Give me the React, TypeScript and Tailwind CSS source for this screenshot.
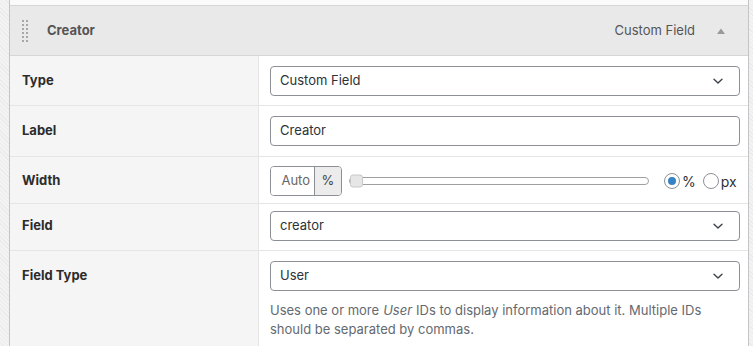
import React from 'react';

const font = { fontFamily: 'Inter, "Noto Sans", sans-serif' };

function Chevron() {
  return (
    <svg width="12" height="12" viewBox="0 0 12 12" className="absolute right-[15px] top-1/2 -translate-y-1/2">
      <path d="M2 4.2 L6 8 L10 4.2" fill="none" stroke="#3c434a" strokeWidth="1.4" strokeLinecap="round" strokeLinejoin="round" />
    </svg>
  );
}

function Select({ value }: { value: string }) {
  return (
    <div className="relative h-[30px] w-full rounded-[4px] border border-[#8c8f94] bg-white flex items-center pl-[9px] text-[13px] text-[#2c3338]">
      {value}
      <Chevron />
    </div>
  );
}

function Row({
  label,
  children,
  pt = 'pt-[10px]',
  h = 'h-[50px]',
  last = false,
}: {
  label: string;
  children: React.ReactNode;
  pt?: string;
  h?: string;
  last?: boolean;
}) {
  return (
    <div className={`flex ${last ? 'flex-1' : `${h} border-b border-[#e5e5e5]`}`}>
      <div className={`w-[249px] shrink-0 bg-[#f5f5f5] border-r border-[#e5e5e5] pl-[12px] ${pt}`}>
        <div className="h-[30px] flex items-center text-[13px] font-bold text-[#2c2c2c]">{label}</div>
      </div>
      <div className={`flex-1 pl-[11px] pr-[8px] ${pt}`}>{children}</div>
    </div>
  );
}

export default function App() {
  return (
    <div style={font} className="w-[753px] h-[346px] overflow-hidden flex bg-[#f0f0f0]">
      <div className="w-[9px] shrink-0 bg-[repeating-linear-gradient(45deg,#f3f3f3_0px,#f3f3f3_2px,#ebebeb_2px,#ebebeb_3px)]" />
      <div className="w-[740px] shrink-0 flex flex-col border-x border-[#c3c4c7] bg-white">
        <div className="h-[6px] shrink-0 border-b border-[#d6d6d6] bg-[#fafafa]" />
        {/* header */}
        <div className="h-[50px] shrink-0 flex items-center bg-[#e9e9e9] border-b border-[#d6d6d6] pl-[12px] pr-[22px]">
          <div className="grid grid-cols-2 gap-x-[2px] gap-y-[2px] w-[6px]">
            {Array.from({ length: 12 }).map((_, i) => (
              <span key={i} className="w-[2px] h-[2px] bg-[#a7a7a7]" />
            ))}
          </div>
          <span className="ml-[19px] text-[13px] font-bold text-[#555]">Creator</span>
          <span className="ml-auto text-[13px] text-[#555]">Custom Field</span>
          <svg width="10" height="8" viewBox="0 0 10 8" className="ml-[21px]">
            <path d="M1 7 L5 1.5 L9 7 Z" fill="#999" />
          </svg>
        </div>

        <Row label="Type">
          <Select value="Custom Field" />
        </Row>

        <Row label="Label" h="h-[51px]">
          <div className="h-[30px] w-full rounded-[4px] border border-[#8c8f94] bg-white flex items-center pl-[9px] text-[13px] text-[#2c3338]">
            Creator
          </div>
        </Row>

        <Row label="Width" h="h-[47px]" pt="pt-[9px]">
          <div className="h-[30px] flex items-center">
            <div className="h-[30px] flex rounded-[4px] border border-[#8c8f94] overflow-hidden text-[13px]">
              <span className="w-[43px] flex items-center justify-end pr-[4px] text-[#666] bg-white">Auto</span>
              <span className="w-[27px] flex items-center justify-center border-l border-[#8c8f94] bg-[#ececec] text-[#444]">%</span>
            </div>
            <div className="ml-[7px] relative w-[300px] h-[8px] rounded-full border border-[#a0a0a0] bg-white">
              <span className="absolute left-0 top-1/2 -translate-y-1/2 w-[13px] h-[13px] rounded-[3px] border border-[#c8c8c8] bg-[#e6e6e6]" />
            </div>
            <div className="ml-[15px] flex items-center gap-[2px] text-[14px] text-[#2c3338]">
              <span className="w-[16px] h-[16px] rounded-full border border-[#8c8f94] flex items-center justify-center bg-white">
                <span className="w-[8px] h-[8px] rounded-full bg-[#3582c4]" />
              </span>
              %
            </div>
            <div className="ml-[7px] flex items-center gap-[2px] text-[14px] text-[#2c3338]">
              <span className="w-[16px] h-[16px] rounded-full border border-[#8c8f94] bg-white" />
              px
            </div>
          </div>
        </Row>

        <Row label="Field" h="h-[47px]" pt="pt-[7px]">
          <Select value="creator" />
        </Row>

        <Row label="Field Type" last>
          <Select value="User" />
          <div className="mt-[10px] text-[13px] leading-[19px] text-[#646970]">
            <div className="flex gap-[4px]">
              <span>Uses one or more</span>
              <span className="italic">User</span>
              <span>IDs to display information about it. Multiple IDs</span>
            </div>
            <div>should be separated by commas.</div>
          </div>
        </Row>
      </div>
      <div className="flex-1 bg-[repeating-linear-gradient(45deg,#f3f3f3_0px,#f3f3f3_2px,#ebebeb_2px,#ebebeb_3px)]" />
    </div>
  );
}
